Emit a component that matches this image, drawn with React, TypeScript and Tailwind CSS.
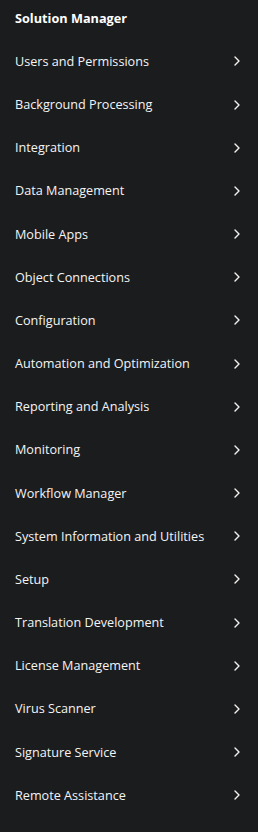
const items = [
  "Users and Permissions",
  "Background Processing",
  "Integration",
  "Data Management",
  "Mobile Apps",
  "Object Connections",
  "Configuration",
  "Automation and Optimization",
  "Reporting and Analysis",
  "Monitoring",
  "Workflow Manager",
  "System Information and Utilities",
  "Setup",
  "Translation Development",
  "License Management",
  "Virus Scanner",
  "Signature Service",
  "Remote Assistance",
];

function Chevron() {
  return (
    <svg width="8" height="10" viewBox="0 0 8 10" fill="none" className="shrink-0">
      <path d="M2 1l4 4-4 4" stroke="#f2f2f2" strokeWidth="1.4" strokeLinecap="round" strokeLinejoin="round" />
    </svg>
  );
}

export default function App() {
  return (
    <div className="w-[258px] h-[832px] bg-[#1b1c1e] text-[#f4f4f4] font-['Open_Sans',sans-serif] overflow-hidden">
      <div className="h-[39.8px] pt-2 px-[15px] text-[12.7px] leading-5 font-bold text-white">Solution Manager</div>
      <ul>
        {items.map((item) => (
          <li key={item} className="h-[43.18px] flex items-center justify-between pl-[15px] pr-[17px] text-[12.65px] cursor-pointer">
            <span>{item}</span>
            <Chevron />
          </li>
        ))}
      </ul>
    </div>
  );
}
